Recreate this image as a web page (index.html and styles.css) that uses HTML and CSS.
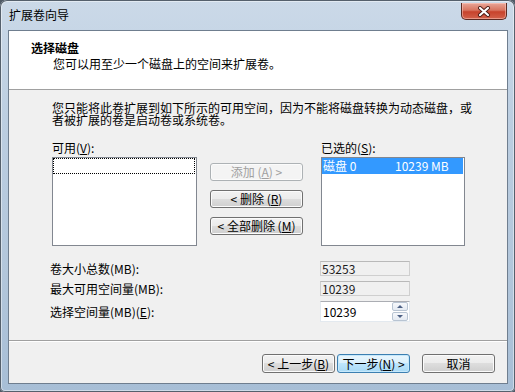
FILE: index.html
```html
<!DOCTYPE html>
<html lang="zh-CN">
<head>
    <meta charset="UTF-8">
    <title>扩展卷向导</title>
    <link rel="stylesheet" href="styles.css">
</head>
<body>
    <div class="window">
        <div class="titlebar">
            <span class="title">扩展卷向导</span>
            <div class="close">
                <svg width="14" height="11" viewBox="0 0 14 11">
                    <path d="M3 2 L11 9 M11 2 L3 9" stroke="#4a1a14" stroke-width="4" stroke-linecap="round"/>
                    <path d="M3 2 L11 9 M11 2 L3 9" stroke="#ffffff" stroke-width="2.2" stroke-linecap="round"/>
                </svg>
            </div>
        </div>

        <div class="client">
            <div class="header">
                <div class="header-title">选择磁盘</div>
                <div class="header-sub">您可以用至少一个磁盘上的空间来扩展卷。</div>
            </div>

            <div class="body">
                <div class="intro">
                    <div class="intro-line">您只能将此卷扩展到如下所示的可用空间，因为不能将磁盘转换为动态磁盘，或</div>
                    <div class="intro-line">者被扩展的卷是启动卷或系统卷。</div>
                </div>

                <div class="pickers">
                    <div class="picker">
                        <div class="picker-label">可用(<u>V</u>):</div>
                        <div class="listbox">
                            <div class="list-item focus-item"></div>
                        </div>
                    </div>

                    <div class="moves">
                        <div class="btn btn-disabled">添加 (<u>A</u>) &gt;</div>
                        <div class="btn">&lt; 删除 (<u>R</u>)</div>
                        <div class="btn">&lt; 全部删除 (<u>M</u>)</div>
                    </div>

                    <div class="picker picker-right">
                        <div class="picker-label">已选的(<u>S</u>):</div>
                        <div class="listbox">
                            <div class="list-item selected-item">
                                <span class="disk-name">磁盘 0</span>
                                <span>10239 MB</span>
                            </div>
                        </div>
                    </div>
                </div>

                <div class="fields">
                    <span class="field-label">卷大小总数(MB):</span>
                    <div class="readonly">53253</div>
                    <span class="field-label">最大可用空间量(MB):</span>
                    <div class="readonly">10239</div>
                    <span class="field-label">选择空间量(MB)(<u>E</u>):</span>
                    <div class="spinbox">
                        <span class="spin-value">10239</span>
                        <div class="spin-buttons">
                            <div class="spin-btn"><span class="arrow-up"></span></div>
                            <div class="spin-btn"><span class="arrow-down"></span></div>
                        </div>
                    </div>
                </div>
            </div>

            <div class="separator"></div>

            <div class="footer">
                <div class="btn btn-footer">&lt; 上一步(<u>B</u>)</div>
                <div class="btn btn-footer btn-default">下一步(<u>N</u>) &gt;</div>
                <div class="btn btn-footer btn-cancel">取消</div>
            </div>
        </div>
    </div>
</body>
</html>
```

FILE: styles.css
```css
html, body {
    margin: 0;
    padding: 0;
}

body {
    background-color: #4f5a66;
    font-family: "Noto Sans CJK SC", "Noto Sans", sans-serif;
    font-size: 12px;
    line-height: 12px;
    color: #000000;
}

u {
    text-decoration: underline;
    text-underline-offset: 1px;
}

.window {
    width: 515px;
    height: 392px;
    box-sizing: border-box;
    padding: 0 7px 8px 8px;
    border-radius: 7px 7px 5px 5px;
    background: linear-gradient(180deg, #cbd9e8 0%, #bccee1 30%, #b2c6db 70%, #a7bed6 100%);
    box-shadow: inset 0 0 0 1px #55606c, inset 0 0 0 2px rgba(255, 255, 255, 0.45);
    display: flex;
    flex-direction: column;
}

/* title bar */

.titlebar {
    height: 30px;
    display: flex;
    justify-content: space-between;
    align-items: flex-start;
}

.title {
    padding-left: 1px;
    margin-top: 9px;
    color: #000000;
}

.close {
    width: 44px;
    height: 16px;
    margin-top: 3px;
    margin-right: 1px;
    border: 1px solid #5b2a22;
    border-top: none;
    border-radius: 0 0 5px 5px;
    background: linear-gradient(180deg, #e9a698 0%, #d8745f 45%, #c7432c 55%, #d2614a 100%);
    box-shadow: inset 0 0 0 1px rgba(255, 210, 200, 0.5);
    display: flex;
    align-items: center;
    justify-content: center;
}

/* client area */

.client {
    height: 354px;
    box-sizing: border-box;
    border: 1px solid #6f7e8f;
    background-color: #f0f0f0;
    display: flex;
    flex-direction: column;
}

.header {
    background-color: #ffffff;
    border-bottom: 1px solid #a0a0a0;
    padding: 11px 0 0 22px;
    height: 47px;
}

.header-title {
    font-weight: bold;
}

.header-sub {
    margin-top: 4px;
    padding-left: 22px;
}

.body {
    height: 250px;
    box-sizing: border-box;
    padding: 12px 0 0 41px;
}

.intro {
    margin: 0 0 16px 2px;
}

.intro-line {
    height: 12px;
    overflow: visible;
}

/* list pickers */

.pickers {
    display: flex;
    margin-left: 2px;
}

.picker {
    width: 145px;
}

.picker-right {
    width: 144px;
    margin-left: 18px;
}

.picker-label {
    height: 15px;
}

.listbox {
    height: 89px;
    box-sizing: border-box;
    border: 1px solid #828790;
    background-color: #ffffff;
}

.list-item {
    height: 16px;
    box-sizing: border-box;
}

.focus-item {
    border: 1px dotted #000000;
    margin-right: 1px;
}

.selected-item {
    background-color: #3399ff;
    color: #ffffff;
    display: flex;
    align-items: center;
    padding-left: 1px;
    margin-right: 1px;
}

.disk-name {
    width: 72px;
}

.moves {
    width: 93px;
    margin-left: 13px;
    padding-top: 21px;
    display: flex;
    flex-direction: column;
    gap: 9px;
}

/* buttons */

.btn {
    height: 18px;
    box-sizing: border-box;
    border: 1px solid #707070;
    border-radius: 3px;
    background: linear-gradient(180deg, #f2f2f2 0%, #ebebeb 50%, #dddddd 50%, #cfcfcf 100%);
    box-shadow: inset 0 0 0 1px #fbfbfb;
    display: flex;
    align-items: center;
    justify-content: center;
    white-space: nowrap;
}

.btn-disabled {
    border-color: #adb2b5;
    background: #f4f4f4;
    color: #a0a0a0;
}

/* value fields */

.fields {
    margin-top: 15px;
    display: grid;
    grid-template-columns: 270px 90px;
    grid-template-rows: 15px 15px 21px;
    row-gap: 5px;
    align-items: center;
}

.readonly {
    height: 15px;
    box-sizing: border-box;
    border: 1px solid #cfcfcf;
    border-top-color: #b9b9b9;
    background-color: #f0f0f0;
    color: #1e1e1e;
    padding-left: 1px;
    display: flex;
    align-items: center;
}

.spinbox {
    height: 21px;
    box-sizing: border-box;
    border: 1px solid #e3e9ef;
    border-top-color: #abadb3;
    background-color: #ffffff;
    display: flex;
    align-items: center;
    justify-content: space-between;
}

.spin-value {
    padding-left: 2px;
}

.spin-buttons {
    width: 16px;
    height: 19px;
    margin-right: 1px;
    display: flex;
    flex-direction: column;
    gap: 1px;
}

.spin-btn {
    flex: 1;
    border: 1px solid #b8c4d2;
    border-radius: 2px;
    background: linear-gradient(180deg, #f6f8fb 0%, #e4eaf2 100%);
    display: flex;
    align-items: center;
    justify-content: center;
}

.arrow-up {
    border-left: 3px solid transparent;
    border-right: 3px solid transparent;
    border-bottom: 3px solid #4d6185;
}

.arrow-down {
    border-left: 3px solid transparent;
    border-right: 3px solid transparent;
    border-top: 3px solid #4d6185;
}

/* footer */

.separator {
    height: 1px;
    background-color: #a0a0a0;
    border-bottom: 1px solid #ffffff;
}

.footer {
    flex: 1;
    display: flex;
    justify-content: flex-end;
    align-items: flex-start;
    padding: 12px 12px 0 0;
}

.btn-footer {
    width: 73px;
    height: 19px;
}

.btn-default {
    margin-left: 2px;
    border-color: #3c7fb1;
    background: linear-gradient(180deg, #eaf6fd 0%, #d9f0fc 50%, #bee6fd 50%, #a7d9f5 100%);
    box-shadow: inset 0 0 0 1px #c6e8fb;
}

.btn-cancel {
    margin-left: 12px;
}
```
